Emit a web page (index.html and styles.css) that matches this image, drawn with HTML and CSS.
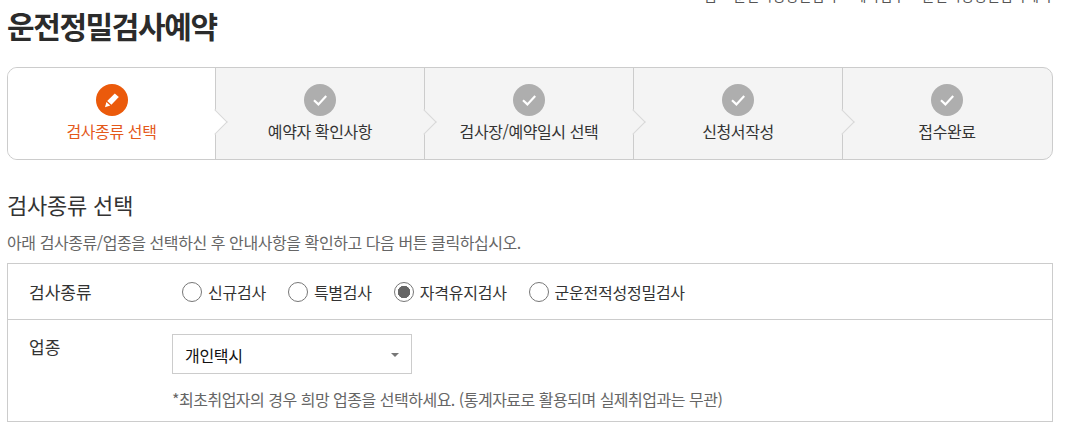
FILE: index.html
```html
<!DOCTYPE html>
<html lang="ko">
<head>
<meta charset="utf-8">
<title>운전정밀검사예약</title>
<link rel="stylesheet" href="styles.css">
</head>
<body>
<main class="page">
  <header class="head">
    <p class="crumbs">홈 &gt; 운전적성정밀검사 &gt; 예약접수 &gt; 운전적성정밀검사예약</p>
    <h1 class="title">운전정밀검사예약</h1>
  </header>
  <ol class="steps">
    <li class="step step-on">
      <span class="badge badge-on">
        <svg viewBox="0 0 32 32" width="32" height="32"><path d="M18.8 9.4l4 3.6-7.4 7.8-4.2-3.8z" fill="#fff"/><path d="M10.4 17.9l3.9 3.7-5.3 1.6z" fill="#fff"/></svg>
      </span>
      <span class="label">검사종류 선택</span>
    </li>
    <li class="step">
      <span class="badge"><svg viewBox="0 0 32 32" width="32" height="32"><path d="M10 16.2l4.4 4.2 7.8-8.4" fill="none" stroke="#fff" stroke-width="2.2"/></svg></span>
      <span class="label">예약자 확인사항</span>
    </li>
    <li class="step">
      <span class="badge"><svg viewBox="0 0 32 32" width="32" height="32"><path d="M10 16.2l4.4 4.2 7.8-8.4" fill="none" stroke="#fff" stroke-width="2.2"/></svg></span>
      <span class="label">검사장/예약일시 선택</span>
    </li>
    <li class="step">
      <span class="badge"><svg viewBox="0 0 32 32" width="32" height="32"><path d="M10 16.2l4.4 4.2 7.8-8.4" fill="none" stroke="#fff" stroke-width="2.2"/></svg></span>
      <span class="label">신청서작성</span>
    </li>
    <li class="step step-last">
      <span class="badge"><svg viewBox="0 0 32 32" width="32" height="32"><path d="M10 16.2l4.4 4.2 7.8-8.4" fill="none" stroke="#fff" stroke-width="2.2"/></svg></span>
      <span class="label">접수완료</span>
    </li>
  </ol>
  <h2 class="section">검사종류 선택</h2>
  <p class="lead">아래 검사종류/업종을 선택하신 후 안내사항을 확인하고 다음 버튼 클릭하십시오.</p>
  <div class="form">
    <div class="row row-type">
      <div class="key">검사종류</div>
      <div class="radios">
        <span class="radio"><i class="dot"></i>신규검사</span>
        <span class="radio"><i class="dot"></i>특별검사</span>
        <span class="radio"><i class="dot dot-on"></i>자격유지검사</span>
        <span class="radio"><i class="dot"></i>군운전적성정밀검사</span>
      </div>
    </div>
    <div class="row row-job">
      <div class="key key-job">업종</div>
      <div class="val">
        <div class="select">개인택시<i class="caret"></i></div>
        <p class="note">*최초취업자의 경우 희망 업종을 선택하세요. (통계자료로 활용되며 실제취업과는 무관)</p>
      </div>
    </div>
  </div>
</main>
</body>
</html>
```
FILE: styles.css
```css
* { box-sizing: border-box; }
html, body { margin: 0; padding: 0; height: 440px; overflow: hidden; background: #fff; }
body { font-family: "Noto Sans CJK KR", "Noto Sans", sans-serif; color: #333; }
.page { width: 1046px; margin: 0 0 0 7px; }
.head { height: 67px; position: relative; }
.crumbs { position: absolute; right: 1px; top: -14px; margin: 0; font-size: 14px; line-height: 18px; letter-spacing: .15px; color: #555; white-space: nowrap; }
.title { margin: 0; padding-top: 4px; font-size: 30px; line-height: 42px; font-weight: 700; letter-spacing: -1.4px; color: #2b2b2b; }
.steps { list-style: none; margin: 0; padding: 0; display: flex; height: 93px; border: 1px solid #ccc; border-radius: 10px; background: #f4f4f4; }
.step { position: relative; width: 209px; display: flex; flex-direction: column; align-items: center; padding-top: 16px; border-right: 1px solid #ccc; font-size: 16px; color: #333; }
.step:first-child { width: 208px; background: #fff; border-radius: 9px 0 0 9px; }
.step-last { border-right: 0; flex: 1; padding-right: 1px; }
.step:not(.step-last)::after { content: ""; position: absolute; z-index: 1; right: -9px; top: 45px; width: 17px; height: 17px; background: inherit; border-top: 1px solid #d8d8d8; border-right: 1px solid #d8d8d8; transform: rotate(45deg); }
.step:first-child::after { background: #fff; }
.step:not(:first-child):not(.step-last)::after { background: #f4f4f4; }
.badge { width: 32px; height: 32px; border-radius: 50%; background: #aeaeae; display: block; }
.badge svg { display: block; }
.badge-on { background: #eb5a0b; }
.label { margin-top: 4px; line-height: 22px; letter-spacing: -.4px; }
.step-on .label { color: #e4591a; }
.section { margin: 29px 0 0; font-size: 22px; line-height: 30px; font-weight: 400; letter-spacing: -.2px; color: #333; }
.lead { margin: 12px 0 0; font-size: 16px; line-height: 22px; letter-spacing: -.43px; color: #666; }
.form { margin-top: 10px; border: 1px solid #ccc; }
.row { display: flex; }
.row-type { height: 56px; align-items: center; border-bottom: 1px solid #ccc; }
.key { width: 164px; padding-left: 21px; font-size: 17px; line-height: 24px; color: #333; flex: none; }
.radios { display: flex; gap: 22px; padding-left: 10px; font-size: 16px; letter-spacing: -.25px; color: #333; }
.radio { display: flex; align-items: center; gap: 6px; line-height: 20px; }
.dot { width: 20px; height: 20px; border: 1px solid #777; border-radius: 50%; background: #fff; display: block; }
.dot-on { background: radial-gradient(circle, #666 0 6px, #fff 6.5px); }
.row-job { height: 101px; }
.key-job { padding-top: 15px; }
.val { padding-top: 14px; }
.select { position: relative; width: 240px; height: 40px; border: 1px solid #ccc; padding-left: 12px; font-size: 16px; line-height: 40px; letter-spacing: -.3px; color: #111; }
.caret { position: absolute; right: 12px; top: 18px; width: 0; height: 0; border-left: 4px solid transparent; border-right: 4px solid transparent; border-top: 4px solid #777; }
.note { margin: 14px 0 0; font-size: 16px; line-height: 22px; letter-spacing: -.5px; color: #666; }
```
